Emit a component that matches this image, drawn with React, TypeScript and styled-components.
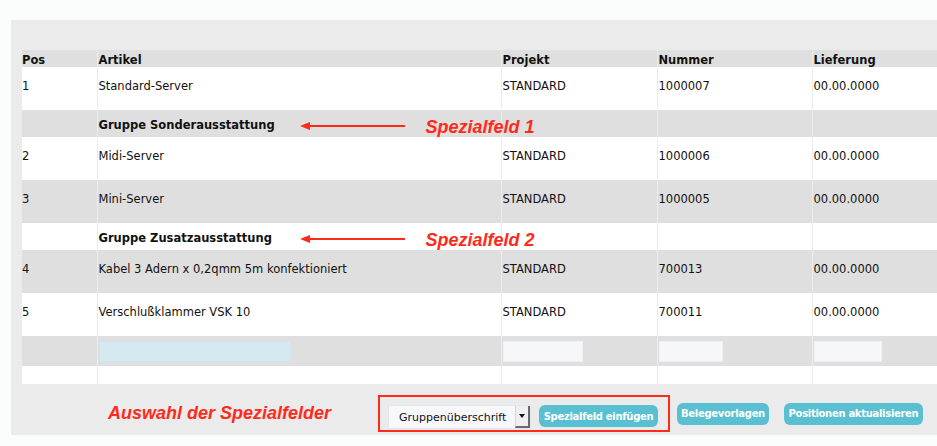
import React from "react";
import styled, { createGlobalStyle } from "styled-components";

const Global = createGlobalStyle`
  html, body { margin: 0; padding: 0; background: #fbfcfc; overflow: hidden; }
  body { font-family: "DejaVu Sans", Verdana, sans-serif; font-size: 11.5px; color: #111; }
`;

const Page = styled.div`
  padding: 20px 0 0 11px;
`;

const Panel = styled.div`
  background: #ebebeb;
  padding: 30px 0 0 11px;
  height: 385px;
  display: flex;
  flex-direction: column;
`;

const Table = styled.table`
  border-collapse: collapse;
  table-layout: fixed;
  width: 915px;
`;

const Row = styled.tr<{ $bg: "gray" | "white" }>`
  background: ${(p) => (p.$bg === "gray" ? "#dfdfdf" : "#ffffff")};
`;

const Cell = styled.td<{ $kind: "head" | "item" | "group" | "input" | "blank" }>`
  border-left: 1px solid #ececec;
  padding: ${(p) =>
    p.$kind === "head"
      ? "3px 0 0 1px"
      : p.$kind === "item"
      ? "12px 0 17px 1px"
      : p.$kind === "group"
      ? "8px 0 5px 1px"
      : p.$kind === "input"
      ? "5px 0 4px 1px"
      : "0 0 0 1px"};
  height: ${(p) => (p.$kind === "blank" ? "18px" : "auto")};
  line-height: 14px;
  font-weight: ${(p) => (p.$kind === "head" || p.$kind === "group" ? "bold" : "normal")};
  vertical-align: top;
  white-space: nowrap;
  overflow: visible;
  position: relative;
  &:first-child { border-left: none; padding-left: 0; }
`;

const Field = styled.div<{ $w: number; $tint?: boolean }>`
  width: ${(p) => p.$w}px;
  height: 21px;
  box-sizing: border-box;
  background: ${(p) => (p.$tint ? "#d5e9f0" : "#f6f7fb")};
  border: 1px solid ${(p) => (p.$tint ? "#d0e3ea" : "#eef0f4")};
`;

const Note = styled.div`
  position: absolute;
  left: 202px;
  top: 6px;
  display: flex;
  align-items: center;
  gap: 20px;
  color: #ff2a1a;
  font-family: "Liberation Sans", Arial, sans-serif;
  font-style: italic;
  font-weight: bold;
  font-size: 18px;
  line-height: 22px;
  & > svg { margin-bottom: 3px; }
`;

const Footer = styled.div`
  display: flex;
  align-items: center;
  padding: 11px 0 0 86px;
`;

const Label = styled.div`
  color: #ff2a1a;
  font-family: "Liberation Sans", Arial, sans-serif;
  font-style: italic;
  font-weight: bold;
  font-size: 18px;
  width: 270px;
  flex-shrink: 0;
  white-space: nowrap;
`;

const Box = styled.div`
  display: flex;
  align-items: flex-start;
  gap: 8px;
  border: 2px solid #ff2a1a;
  padding: 8px 10px 1px 8px;
  box-sizing: border-box;
  height: 37px;
  flex-shrink: 0;
`;

const Select = styled.div`
  width: 143px;
  height: 24px;
  flex-shrink: 0;
  box-sizing: border-box;
  background: #f7f8fc;
  border: 1px solid #e4e6ea;
  display: flex;
  align-items: center;
  justify-content: space-between;
  padding-left: 10px;
  font-size: 11px;
  color: #111;
  white-space: nowrap;
`;

const Arrow = styled.div`
  width: 15px;
  height: 22px;
  box-sizing: border-box;
  background: #f0f0f0;
  border-left: 1px solid #d6d6d6;
  border-right: 2px solid #6a6a6a;
  border-bottom: 2px solid #6a6a6a;
  display: flex;
  align-items: center;
  justify-content: center;
  &::after {
    content: "";
    border-left: 3px solid transparent;
    border-right: 3px solid transparent;
    border-top: 4px solid #111;
  }
`;

const Button = styled.button<{ $ml?: number; $w: number }>`
  height: 22px;
  width: ${(p) => p.$w}px;
  flex-shrink: 0;
  border: none;
  border-radius: 6px;
  background: #58c0d0;
  color: #fff;
  font-family: "DejaVu Sans", Verdana, sans-serif;
  font-weight: bold;
  font-size: 10px;
  letter-spacing: -0.3px;
  white-space: nowrap;
  padding: 0;
  margin-left: ${(p) => p.$ml ?? 0}px;
  cursor: pointer;
`;

const ArrowIcon = () => (
  <svg width="106" height="8" viewBox="0 0 106 8">
    <line x1="8" y1="4" x2="105" y2="4" stroke="#ff2a1a" strokeWidth="2" />
    <polygon points="0,4 10,0 10,8" fill="#ff2a1a" />
  </svg>
);

type Item = { pos: string; art: string; proj: string; num: string; date: string; bg: "gray" | "white" };

const items1: Item[] = [
  { pos: "2", art: "Midi-Server", proj: "STANDARD", num: "1000006", date: "00.00.0000", bg: "white" },
  { pos: "3", art: "Mini-Server", proj: "STANDARD", num: "1000005", date: "00.00.0000", bg: "gray" },
];
const items2: Item[] = [
  { pos: "4", art: "Kabel 3 Adern x 0,2qmm 5m konfektioniert", proj: "STANDARD", num: "700013", date: "00.00.0000", bg: "gray" },
  { pos: "5", art: "Verschlußklammer VSK 10", proj: "STANDARD", num: "700011", date: "00.00.0000", bg: "white" },
];

const ItemRow = ({ it }: { it: Item }) => (
  <Row $bg={it.bg}>
    <Cell $kind="item">{it.pos}</Cell>
    <Cell $kind="item">{it.art}</Cell>
    <Cell $kind="item">{it.proj}</Cell>
    <Cell $kind="item">{it.num}</Cell>
    <Cell $kind="item">{it.date}</Cell>
  </Row>
);

const GroupRow = ({ title, note, bg }: { title: string; note: string; bg: "gray" | "white" }) => (
  <Row $bg={bg}>
    <Cell $kind="group"></Cell>
    <Cell $kind="group">
      {title}
      <Note>
        <ArrowIcon />
        <span>{note}</span>
      </Note>
    </Cell>
    <Cell $kind="group"></Cell>
    <Cell $kind="group"></Cell>
    <Cell $kind="group"></Cell>
  </Row>
);

export default function App() {
  return (
    <>
      <Global />
      <Page>
        <Panel>
          <Table>
            <colgroup>
              <col style={{ width: 75 }} />
              <col style={{ width: 404 }} />
              <col style={{ width: 156 }} />
              <col style={{ width: 155 }} />
              <col style={{ width: 125 }} />
            </colgroup>
            <tbody>
              <Row $bg="gray">
                <Cell $kind="head">Pos</Cell>
                <Cell $kind="head">Artikel</Cell>
                <Cell $kind="head">Projekt</Cell>
                <Cell $kind="head">Nummer</Cell>
                <Cell $kind="head">Lieferung</Cell>
              </Row>
              <ItemRow it={{ pos: "1", art: "Standard-Server", proj: "STANDARD", num: "1000007", date: "00.00.0000", bg: "white" }} />
              <GroupRow title="Gruppe Sonderausstattung" note="Spezialfeld 1" bg="gray" />
              {items1.map((it) => (
                <ItemRow key={it.pos} it={it} />
              ))}
              <GroupRow title="Gruppe Zusatzausstattung" note="Spezialfeld 2" bg="white" />
              {items2.map((it) => (
                <ItemRow key={it.pos} it={it} />
              ))}
              <Row $bg="gray">
                <Cell $kind="input"></Cell>
                <Cell $kind="input"><Field $w={192} $tint /></Cell>
                <Cell $kind="input"><Field $w={80} /></Cell>
                <Cell $kind="input"><Field $w={64} /></Cell>
                <Cell $kind="input"><Field $w={68} /></Cell>
              </Row>
              <Row $bg="white">
                <Cell $kind="blank"></Cell>
                <Cell $kind="blank"></Cell>
                <Cell $kind="blank"></Cell>
                <Cell $kind="blank"></Cell>
                <Cell $kind="blank"></Cell>
              </Row>
            </tbody>
          </Table>
          <Footer>
            <Label>Auswahl der Spezialfelder</Label>
            <Box>
              <Select>
                <span>Gruppenüberschrift</span>
                <Arrow />
              </Select>
              <Button $w={119}>Spezialfeld einfügen</Button>
            </Box>
            <Button $w={92} $ml={7}>Belegevorlagen</Button>
            <Button $w={139} $ml={15}>Positionen aktualisieren</Button>
          </Footer>
        </Panel>
      </Page>
    </>
  );
}
